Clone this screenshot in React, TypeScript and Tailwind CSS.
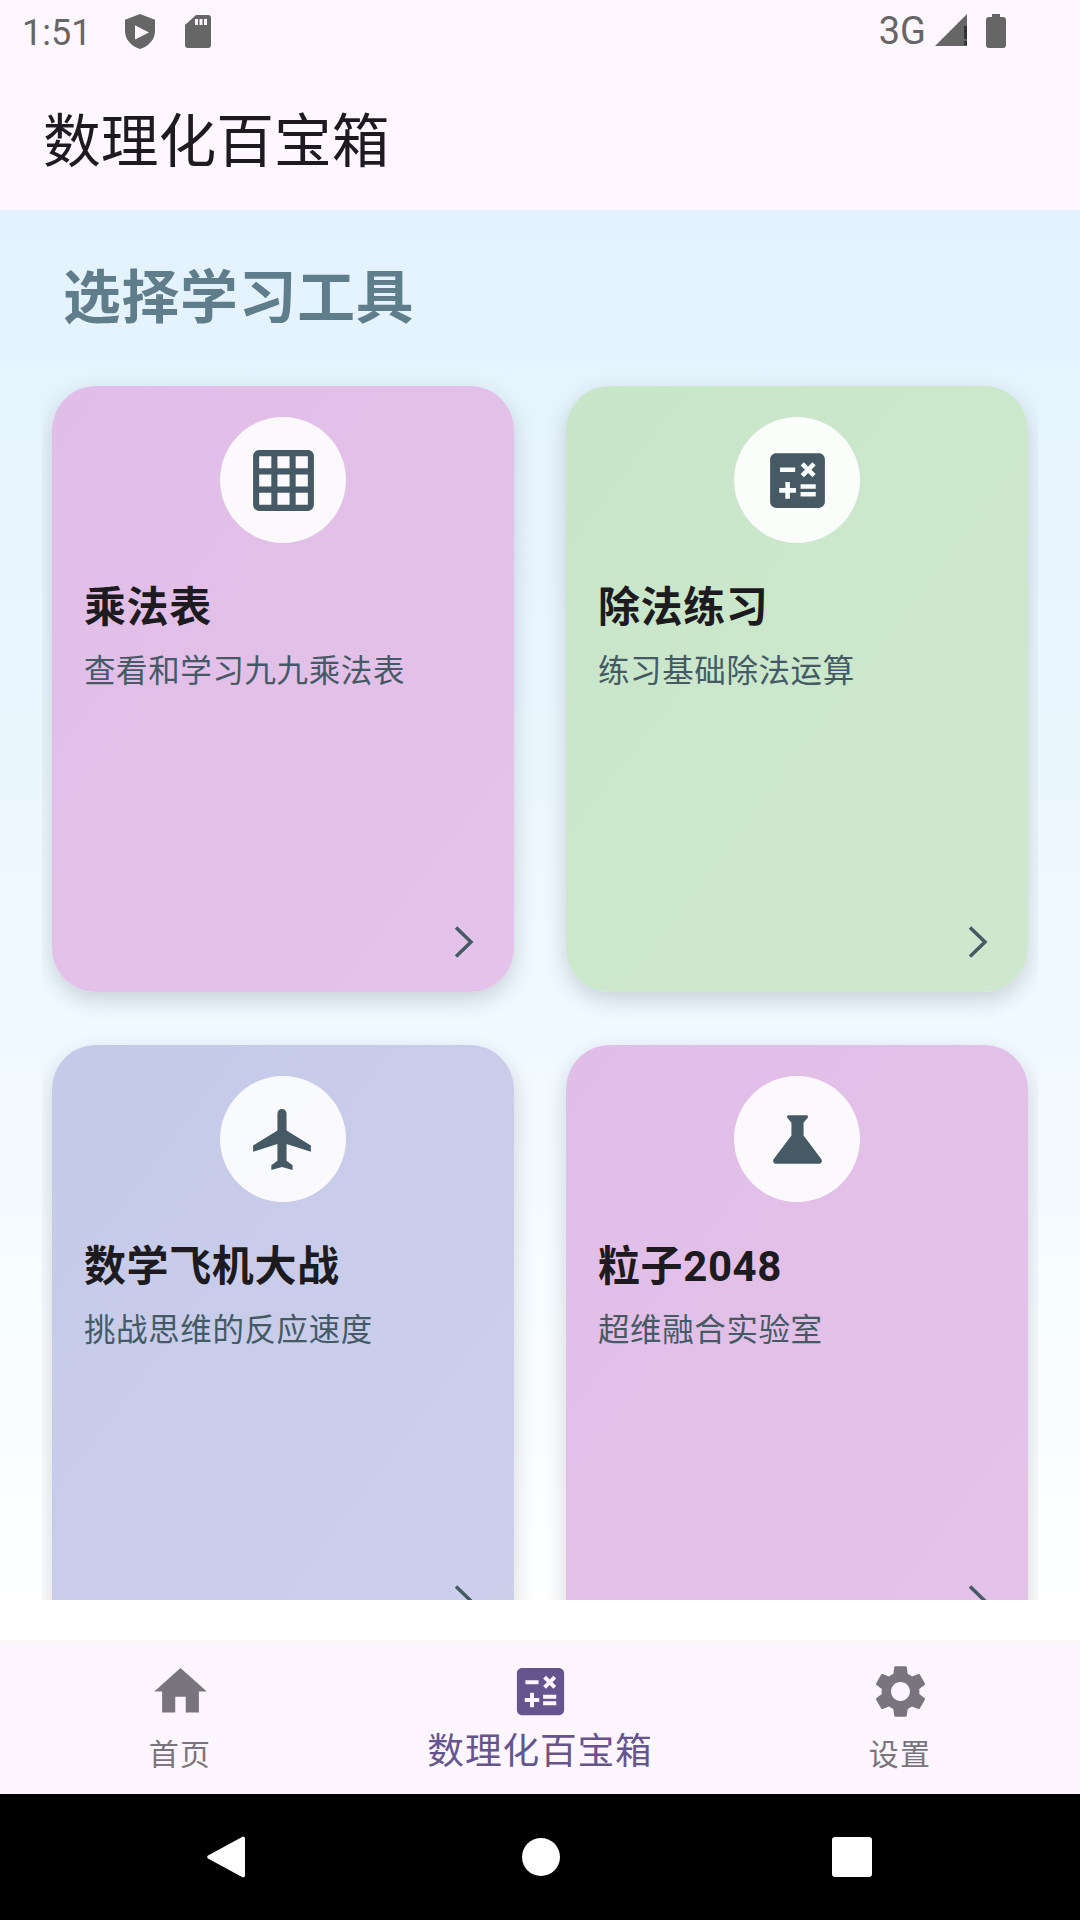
import React from "react";

const PATHS = {
  grid: "M20 2H4c-1.1 0-2 .9-2 2v16c0 1.1.9 2 2 2h16c1.1 0 2-.9 2-2V4c0-1.1-.9-2-2-2zM8 20H4v-4h4v4zm0-6H4v-4h4v4zm0-6H4V4h4v4zm6 12h-4v-4h4v4zm0-6h-4v-4h4v4zm0-6h-4V4h4v4zm6 12h-4v-4h4v4zm0-6h-4v-4h4v4zm0-6h-4V4h4v4z",
  calc: "M19 3H5c-1.1 0-2 .9-2 2v14c0 1.1.9 2 2 2h14c1.1 0 2-.9 2-2V5c0-1.1-.9-2-2-2zm-5.97 4.06L14.09 6l1.41 1.41L16.91 6l1.06 1.06-1.41 1.41 1.41 1.41-1.06 1.06-1.41-1.4-1.41 1.41-1.06-1.06 1.41-1.41-1.41-1.42zm-6.78.66h5v1.5h-5v-1.5zM11.5 16h-2v2H8v-2H6v-1.5h2v-2h1.5v2h2V16zm6.5 1.25h-5v-1.5h5v1.5zm0-2.5h-5v-1.5h5v1.5z",
  flight: "M21 16v-2l-8-5V3.5c0-.83-.67-1.5-1.5-1.5S10 2.67 10 3.5V9l-8 5v2l8-2.5V19l-2 1.5V22l3.5-1 3.5 1v-1.5L13 19v-5.5l8 2.5z",
  science: "M19.8 18.4L14 10.67V6.5l1.35-1.69c.26-.33.03-.81-.39-.81H9.04c-.42 0-.65.48-.39.81L10 6.5v4.17L4.2 18.4c-.49.66-.02 1.6.8 1.6h14c.82 0 1.29-.94.8-1.6z",
  home: "M10 20v-6h4v6h5v-8h3L12 3 2 12h3v8z",
  settings: "M19.14 12.94c.04-.3.06-.61.06-.94 0-.32-.02-.64-.07-.94l2.03-1.58c.18-.14.23-.41.12-.61l-1.92-3.32c-.12-.22-.37-.29-.59-.22l-2.39.96c-.5-.38-1.03-.7-1.62-.94l-.36-2.54c-.04-.24-.24-.41-.48-.41h-3.84c-.24 0-.43.17-.47.41l-.36 2.54c-.59.24-1.13.57-1.62.94l-2.39-.96c-.22-.08-.47 0-.59.22L2.74 8.87c-.12.21-.08.47.12.61l2.03 1.58c-.05.3-.09.63-.09.94s.02.64.07.94l-2.03 1.58c-.18.14-.23.41-.12.61l1.92 3.32c.12.22.37.29.59.22l2.39-.96c.5.38 1.03.7 1.62.94l.36 2.54c.05.24.24.41.48.41h3.84c.24 0 .44-.17.47-.41l.36-2.54c.59-.24 1.13-.56 1.62-.94l2.39.96c.22.08.47 0 .59-.22l1.92-3.32c.12-.22.07-.47-.12-.61l-2.01-1.58zM12 15.6c-1.98 0-3.6-1.62-3.6-3.6s1.62-3.6 3.6-3.6 3.6 1.62 3.6 3.6-1.62 3.6-3.6 3.6z",
};

function Icon({ d, className }: { d: string; className: string }) {
  return (
    <svg viewBox="0 0 24 24" className={className} fill="currentColor">
      <path d={d} />
    </svg>
  );
}

function ToolCard({
  icon,
  title,
  desc,
  bg,
}: {
  icon: string;
  title: string;
  desc: string;
  bg: string;
}) {
  return (
    <div className={`flex h-[606px] flex-col rounded-[44px] px-[32px] pt-[31px] pb-[26px] shadow-[0_8px_22px_rgba(0,0,0,0.16)] ${bg}`}>
      <div className="flex h-[126px] w-[126px] items-center justify-center self-center rounded-full bg-white/90">
        <Icon d={icon} className="h-[73px] w-[73px] text-[#455A64]" />
      </div>
      <div className="mt-[37px] text-[42px] leading-[56px] font-bold tracking-[0.6px] text-[#1D1B20]">{title}</div>
      <div className="mt-[14px] text-[31.5px] leading-[44px] tracking-[0.6px] text-[#455A64]">{desc}</div>
      <svg viewBox="0 0 32 48" className="mt-auto mr-[-1px] h-[48px] w-[32px] self-end text-[#455A64]" fill="none">
        <polyline points="5,9.5 20,24 5,38.5" stroke="currentColor" strokeWidth="3.5" />
      </svg>
    </div>
  );
}

function NavItem({ icon, label }: { icon: string; label: string }) {
  return (
    <div className="flex flex-col items-center pt-[18px] text-[#79747E]">
      <Icon d={icon} className="h-[63px] w-[63px]" />
      <div className="mt-[11px] text-[30px] leading-[42px] tracking-[1.3px]">{label}</div>
    </div>
  );
}

export default function App() {
  return (
    <div className="flex h-[1920px] w-[1080px] flex-col overflow-hidden bg-white font-['Roboto','Noto_Sans_CJK_SC',sans-serif]">
      {/* status bar */}
      <div className="flex h-[63px] items-start justify-between bg-[#FEF7FF] text-[#666666]">
        <div className="flex items-start pl-[22px]">
          <span className="mt-[12px] text-[36px] leading-[42px]">1:51</span>
          <svg viewBox="0 0 30 37" className="mt-[14px] ml-[34px] h-[35px] w-[30px]" preserveAspectRatio="none">
            <path d="M15 0L30 6V18C30 27 24 34 15 37C6 34 0 27 0 18V6Z" fill="currentColor" />
            <path d="M10 12L24 19.5L10 27Z" fill="#FEF7FF" />
          </svg>
          <svg viewBox="0 0 26 33" className="mt-[15px] ml-[30px] h-[33px] w-[26px]">
            <path d="M11 0H23a3 3 0 0 1 3 3V30a3 3 0 0 1-3 3H3a3 3 0 0 1-3-3V10Z" fill="currentColor" />
            <rect x="10" y="4" width="3" height="6" fill="#FEF7FF" />
            <rect x="14.5" y="4" width="3" height="6" fill="#FEF7FF" />
            <rect x="19" y="4" width="3" height="6" fill="#FEF7FF" />
          </svg>
        </div>
        <div className="flex items-start pr-[74px]">
          <span className="mt-[10px] text-[38px] leading-[42px]">3G</span>
          <svg viewBox="0 0 32 32" className="mt-[14px] ml-[9px] h-[32px] w-[32px]">
            <path d="M32 0V32H0Z" fill="currentColor" />
            <rect x="29" y="12" width="3" height="13" fill="#333333" />
            <rect x="29" y="27" width="3" height="4" fill="#333333" />
          </svg>
          <svg viewBox="0 0 20 34" className="mt-[14px] ml-[19px] h-[34px] w-[20px]">
            <path d="M6 0H14V3H17a3 3 0 0 1 3 3V31a3 3 0 0 1-3 3H3a3 3 0 0 1-3-3V6a3 3 0 0 1 3-3H6Z" fill="currentColor" />
          </svg>
        </div>
      </div>

      {/* app bar */}
      <div className="flex h-[147px] items-center bg-[#FEF7FF] pt-[11px] pl-[43px] text-[57.75px] leading-[80px] text-[#1D1B20]">
        数理化百宝箱
      </div>

      {/* main */}
      <div className="flex min-h-0 flex-1 flex-col bg-gradient-to-b from-[#E3F2FD] via-[#EDF8FF] to-[#FFFFFF]">
        <div className="h-[158px] pt-[48px] pl-[63px] text-[57.75px] leading-[80px] font-bold tracking-[0.8px] text-[#607D8B]">
          选择学习工具
        </div>
        <div className="mx-[42px] mb-[42px] min-h-0 flex-1 overflow-hidden px-[10px] pt-[18px]">
          <div className="grid grid-cols-2 gap-x-[52px] gap-y-[53px]">
            <ToolCard icon={PATHS.grid} title="乘法表" desc="查看和学习九九乘法表" bg="bg-gradient-to-br from-[#E1BEE7] to-[#E4C2E9]" />
            <ToolCard icon={PATHS.calc} title="除法练习" desc="练习基础除法运算" bg="bg-gradient-to-br from-[#C8E6C9] to-[#CEE8CF]" />
            <ToolCard icon={PATHS.flight} title="数学飞机大战" desc="挑战思维的反应速度" bg="bg-gradient-to-br from-[#C5CAE9] to-[#CCD0EB]" />
            <ToolCard icon={PATHS.science} title="粒子2048" desc="超维融合实验室" bg="bg-gradient-to-br from-[#E1BEE7] to-[#E4C2E9]" />
          </div>
        </div>
      </div>

      {/* bottom nav */}
      <div className="grid h-[152px] grid-cols-3 bg-[#FDF6FE] shadow-[0_-1px_3px_rgba(0,0,0,0.06)]">
        <NavItem icon={PATHS.home} label="首页" />
        <div className="flex flex-col items-center pt-[18px] text-[#65558F]">
          <Icon d={PATHS.calc} className="h-[63px] w-[63px]" />
          <div className="mt-[6px] text-[36.75px] leading-[46px] tracking-[0.8px]">数理化百宝箱</div>
        </div>
        <NavItem icon={PATHS.settings} label="设置" />
      </div>

      {/* system nav */}
      <div className="flex h-[126px] items-center justify-center bg-black pr-[2px]">
        <svg viewBox="0 0 38 44" className="h-[42px] w-[38px]" fill="white" preserveAspectRatio="none">
          <path d="M36 0.5a2 2 0 0 1 2 2V41.5a2 2 0 0 1-2 2L1 23.5a2 2 0 0 1 0-3Z" />
        </svg>
        <div className="ml-[277px] h-[38px] w-[38px] rounded-full bg-white" />
        <div className="ml-[272px] h-[40px] w-[40px] rounded-[3px] bg-white" />
      </div>
    </div>
  );
}
